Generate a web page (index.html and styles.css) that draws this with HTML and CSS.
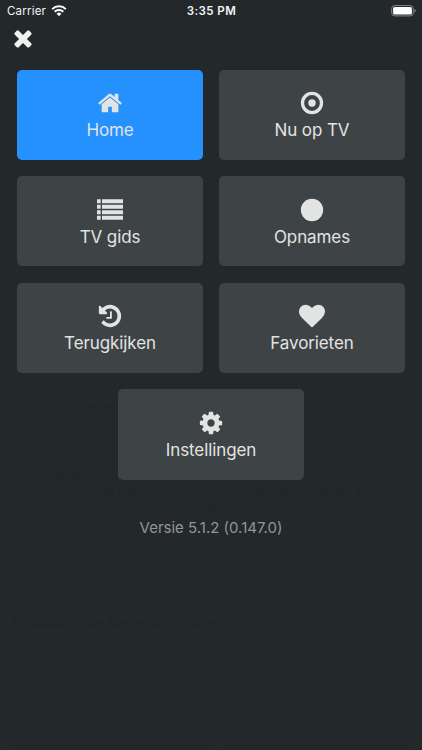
FILE: index.html
```
<!DOCTYPE html>
<html lang="nl">
<head>
<meta charset="utf-8">
<title>Menu</title>
<link rel="stylesheet" href="styles.css">
</head>
<body>
<main class="screen">
  <section class="underlay" aria-hidden="true">
    <h2>Grey's Anatomy</h2>
    <p>Amerikaanse ziekenhuisserie<br>dramaserie met Ellen Pompeo, Justin Chambers, Chandra Wilson<br>en anderen, waarin het persoonlijke en professionele leven van...</p>
    <h3>Populair in de komende 7 dagen</h3>
    <div class="posters"><i></i><i></i></div>
  </section>
  <div class="overlay">
  <header class="status">
    <div class="carrier"><span>Carrier</span>
      <svg class="wifi" viewBox="0 0 16 12"><path d="M1.2 4.1a9.7 9.7 0 0 1 13.6 0M3.7 6.7a6.1 6.1 0 0 1 8.6 0" fill="none" stroke="#fff" stroke-width="2"/><path d="M5.6 8.8a3.4 3.4 0 0 1 4.8 0L8 11.3z" fill="#fff"/></svg>
    </div>
    <div class="time">3:35 PM</div>
    <div class="power"><svg class="battery" viewBox="0 0 26 12"><rect x="1.7" y=".6" width="21.6" height="10.3" rx="3" fill="none" stroke="#85898b"/><rect x="3.1" y="2" width="18.8" height="7.5" rx="1.6" fill="#fff"/><path d="M24.5 3.9c1.7.6 1.7 3.1 0 3.7z" fill="#85898b"/></svg></div>
  </header>
  <button class="close" aria-label="Sluiten"><svg class="icon" viewBox="0 0 1792 1792"><path d="M1490 1322q0 40-28 68l-136 136q-28 28-68 28t-68-28l-294-294-294 294q-28 28-68 28t-68-28l-136-136q-28-28-28-68t28-68l294-294-294-294q-28-28-28-68t28-68l136-136q28-28 68-28t68 28l294 294 294-294q28-28 68-28t68 28l136 136q28 28 28 68t-28 68l-294 294 294 294q28 28 28 68z"/></svg></button>
  <nav class="menu">
    <a class="tile active"><svg class="icon" viewBox="0 0 1792 1792"><path d="M1472 992v480q0 26-19 45t-45 19h-384v-384h-256v384h-384q-26 0-45-19t-19-45v-480q0-1 .5-3t.5-3l575-474 575 474q1 2 1 6zm223-69l-62 74q-8 9-21 11h-3q-13 0-21-7l-692-577-692 577q-12 8-24 7-13-2-21-11l-62-74q-8-10-7-23.5t11-21.5l719-599q32-26 76-26t76 26l244 204v-195q0-14 9-23t23-9h192q14 0 23 9t9 23v408l219 182q10 8 11 21.5t-7 23.5z"/></svg><span>Home</span></a>
    <a class="tile"><svg class="icon" viewBox="0 0 1792 1792"><circle cx="896" cy="896" r="656" fill="none" stroke="#e2e3e3" stroke-width="224"/><circle cx="896" cy="896" r="256"/></svg><span>Nu op TV</span></a>
    <a class="tile"><svg class="icon" viewBox="0 0 26 26"><path d="M0 2.3h3.7v3.9H0zM5 2.3h21v3.9H5zM0 7.8h3.7v3.9H0zM5 7.8h21v3.9H5zM0 13.3h3.7v3.9H0zM5 13.3h21v3.9H5zM0 18.8h3.7v3.9H0zM5 18.8h21v3.9H5z"/></svg><span>TV gids</span></a>
    <a class="tile"><svg class="icon" viewBox="0 0 1792 1792"><circle cx="896" cy="896" r="768"/></svg><span>Opnames</span></a>
    <a class="tile"><svg class="icon" viewBox="0 0 1792 1792"><path d="M1664 896q0 156-61 298t-164 245-245 164-298 61q-172 0-327-72.5t-264-204.5q-7-10-6.5-22.5t8.5-20.5l137-138q10-9 25-9 16 2 23 12 73 95 179 147t225 52q104 0 198.5-40.5t163.5-109.5 109.5-163.5 40.5-198.5-40.5-198.5-109.5-163.5-163.5-109.5-198.5-40.5q-98 0-188 35.5t-160 101.5l137 138q31 30 14 69-17 40-59 40h-448q-26 0-45-19t-19-45v-448q0-42 40-59 39-17 69 14l130 129q107-101 244.5-156.5t284.5-55.5q156 0 298 61t245 164 164 245 61 298zm-640-288v448q0 14-9 23t-23 9h-320q-14 0-23-9t-9-23v-64q0-14 9-23t23-9h224v-352q0-14 9-23t23-9h64q14 0 23 9t9 23z"/></svg><span>Terugkijken</span></a>
    <a class="tile"><svg class="icon" viewBox="0 0 1792 1792"><path d="M896 1664q-26 0-44-18l-624-602q-10-8-27.5-26t-55.5-65.5-68-97.5-53.5-121-23.5-138q0-220 127-344t351-124q62 0 126.5 21.5t120 58 95.5 68.5 76 68q36-36 76-68t95.5-68.5 120-58 126.5-21.5q224 0 351 124t127 344q0 221-229 450l-623 600q-18 18-44 18z"/></svg><span>Favorieten</span></a>
    <a class="tile last"><svg class="icon" viewBox="0 0 1792 1792"><path d="M1152 896q0-106-75-181t-181-75-181 75-75 181 75 181 181 75 181-75 75-181zm512-109v222q0 12-8 23t-20 13l-185 28q-19 54-39 91 35 50 107 138 10 12 10 25t-9 23q-27 37-99 108t-94 71q-12 0-26-9l-138-108q-44 23-91 38-16 136-29 186-7 28-36 28h-222q-14 0-24.5-8.5t-11.5-21.5l-28-184q-49-16-90-37l-141 107q-10 9-25 9-14 0-25-11-126-114-165-168-7-10-7-23 0-12 8-23 15-21 51-66.5t54-70.5q-27-50-41-99l-183-27q-13-2-21-12.5t-8-23.5v-222q0-12 8-23t19-13l186-28q14-46 39-92-40-57-107-138-10-12-10-24 0-10 9-23 26-36 98.5-107.5t94.5-71.5q13 0 26 10l138 107q44-23 91-38 16-136 29-186 7-28 36-28h222q14 0 24.5 8.5t11.5 21.5l28 184q49 16 90 37l142-107q9-9 24-9 13 0 25 10 129 119 165 170 7 8 7 22 0 12-8 23-15 21-51 66.5t-54 70.5q26 50 41 98l183 28q13 2 21 12.5t8 23.5z"/></svg><span>Instellingen</span></a>
  </nav>
  <p class="version">Versie 5.1.2 (0.147.0)</p>
  </div>
</main>
</body>
</html>
```
FILE: styles.css
```
* { box-sizing: border-box; }
body { margin: 0; background: #23282b; font-family: Inter, "Liberation Sans", sans-serif; color: #e2e3e3; }
.screen { position: relative; height: 750px; overflow: hidden; background: #23282b; }
/* Home page that stays faintly visible below the menu overlay */
.underlay { height: 750px; padding: 399px 11px 0; color: #212629; }
.underlay h2 { margin: 0 14px; font-size: 15px; line-height: 20px; }
.underlay p { margin: 47px 14px 0; font-size: 12px; line-height: 17px; white-space: nowrap; }
.underlay h3 { margin: 94px 0 0; font-size: 14px; line-height: 22px; }
.posters { display: grid; grid-template-columns: 1fr 186px; gap: 12px; margin-top: 30px; }
.posters i { height: 90px; background: #22272a; }
/* Menu overlay */
.overlay { position: absolute; inset: 0; display: flex; flex-direction: column; }
.status { height: 22px; padding: 0 6px 0 7px; display: grid; grid-template-columns: 1fr auto 1fr; align-items: center; color: #f4f4f4; font-size: 11.5px; line-height: 22px; }
.carrier { display: flex; align-items: center; gap: 5px; letter-spacing: .2px; }
.wifi { width: 16px; height: 12px; }
.time { font-weight: 600; letter-spacing: .45px; }
.power { display: flex; justify-content: flex-end; }
.battery { width: 26px; height: 12px; }
.close { width: 26px; height: 26px; margin: 3.4px 0 0 10px; padding: 0; border: 0; background: none; }
.icon { display: block; width: 26px; height: 26px; fill: #e2e3e3; flex: none; }
.close .icon { fill: #f0f0f0; }
.menu { display: grid; grid-template-columns: 186px 186px; grid-auto-rows: 90.3px; gap: 16.3px 16px; padding: 18.2px 17px 0; }
.tile { display: flex; flex-direction: column; align-items: center; padding-top: 20.4px; border-radius: 5px; background: #3e4345; font-size: 17px; line-height: 28px; letter-spacing: -.1px; }
.tile.active { background: #2491ff; }
.last { grid-column: 1 / 3; justify-self: center; width: 186px; }
.version { margin: 36.5px 0 0; text-align: center; font-size: 15px; line-height: 24px; color: #929597; }
```
